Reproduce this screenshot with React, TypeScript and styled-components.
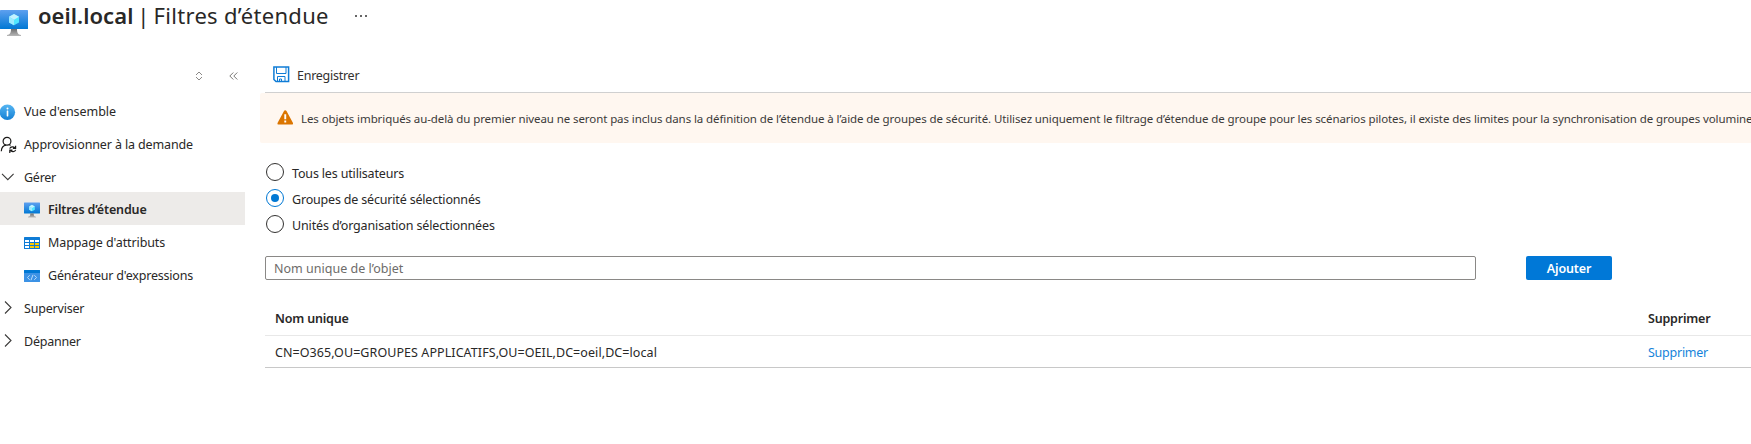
import React from 'react';
import styled, { createGlobalStyle } from 'styled-components';

const GlobalStyle = createGlobalStyle`
  * { box-sizing: border-box; }
  body { margin: 0; background: #fff; overflow: hidden; }
`;

const Page = styled.div`
  height: 444px;
  overflow: hidden;
  color: #292827;
  font: 12.5px "Noto Sans", "Open Sans", sans-serif;
  white-space: nowrap;
  svg { display: block; flex: none; }
`;
const Label = styled.span<{ $ls?: number }>`
  letter-spacing: ${p => p.$ls ?? 0}px;
`;

const Header = styled.header`
  display: flex;
  height: 60px;
  align-items: flex-start;
`;
const HeaderIcon = styled.div`
  width: 38px;
  padding-top: 9px;
`;
const Title = styled.h1`
  display: flex;
  margin: 0;
  font-size: 22px;
  font-weight: 400;
  line-height: 30px;
  strong { font-weight: 600; }
`;
const Divider = styled.span`
  width: 20px;
  text-align: center;
  line-height: 31px;
`;
const More = styled.button`
  display: flex;
  gap: 3px;
  margin: 15px 0 0 26px;
  padding: 0;
  border: 0;
  background: none;
  i { width: 2px; height: 2px; background: #666; }
`;

const Body = styled.div`
  display: flex;
`;
const Sidebar = styled.nav`
  width: 245px;
  flex: none;
`;
const SidebarTools = styled.div`
  display: flex;
  justify-content: flex-end;
  align-items: center;
  gap: 26px;
  height: 34px;
  padding: 0 7px 2px 0;
`;
const NavItem = styled.a<{ $child?: boolean; $active?: boolean }>`
  display: flex;
  align-items: center;
  height: 32.75px;
  padding-top: ${p => (p.$active ? 2 : 3)}px;
  padding-left: ${p => (p.$child ? 24 : 0)}px;
  background: ${p => (p.$active ? '#edebe9' : 'transparent')};
  font-weight: ${p => (p.$active ? 600 : 400)};
`;
const NavIcon = styled.span`
  width: 24px;
`;

const Main = styled.main`
  flex: 1;
  min-width: 0;
  padding-left: 15px;
`;
const Toolbar = styled.div`
  display: flex;
  align-items: center;
  gap: 7px;
  height: 33px;
  margin-left: 5px;
  padding: 0 0 3px 8px;
  border-bottom: 1px solid #d0d0d0;
  color: #323130;
`;
const SaveLabel = styled(Label)`
  padding-top: 2px;
`;
const Banner = styled.div`
  display: flex;
  align-items: center;
  gap: 7px;
  height: 50px;
  padding-left: 17px;
  border-radius: 2px 0 0 2px;
  background: #fff7f0;
  color: #3b3a39;
  font-size: 11.5px;
  overflow: hidden;
  svg { margin-bottom: 2px; }
`;
const Options = styled.div`
  display: flex;
  flex-direction: column;
  padding: 16px 0 0 6px;
`;
const Option = styled.label`
  display: flex;
  align-items: center;
  gap: 8px;
  height: 26px;
`;
const Circle = styled.span<{ $on?: boolean }>`
  display: grid;
  place-items: center;
  width: 18px;
  height: 18px;
  border: 1px solid ${p => (p.$on ? '#0078d4' : '#323130')};
  border-radius: 50%;
  &::after {
    content: "";
    width: 8px;
    height: 8px;
    border-radius: 50%;
    background: ${p => (p.$on ? '#0078d4' : 'transparent')};
  }
`;
const OptionLabel = styled(Label)`
  padding-top: 3px;
`;
const AddRow = styled.div`
  display: flex;
  gap: 50px;
  margin: 19px 0 0 5px;
`;
const Field = styled.div`
  width: 1211px;
  height: 24px;
  padding-left: 8px;
  border: 1px solid #8a8886;
  border-radius: 2px;
  color: #6e6c6a;
  line-height: 24px;
`;
const AddButton = styled.button`
  width: 86px;
  height: 24px;
  padding: 1px 0 0;
  border: 0;
  border-radius: 2px;
  background: #0078d7;
  color: #fff;
  font: 600 12.5px/23px "Noto Sans", sans-serif;
`;
const Table = styled.div`
  margin: 22px 0 0 5px;
`;
const TableRow = styled.div<{ $head?: boolean }>`
  display: grid;
  grid-template-columns: 1373px 1fr;
  align-items: center;
  height: ${p => (p.$head ? 34 : 32)}px;
  padding-top: ${p => (p.$head ? 0 : 2)}px;
  padding-left: 10px;
  border-bottom: 1px solid ${p => (p.$head ? '#e8e8e8' : '#c8c8c8')};
  font-weight: ${p => (p.$head ? 600 : 400)};
`;
const DeleteLink = styled(Label)`
  color: #1583da;
`;

const Monitor = ({ size }: { size: number }) => (
  <svg width={size} height={size} viewBox="0 0 28 28">
    <defs>
      <linearGradient id="screen" x2="0" y2="1">
        <stop stopColor="#5ea0ef" />
        <stop offset="1" stopColor="#0078d4" />
      </linearGradient>
      <linearGradient id="stand" x2="0" y2="1">
        <stop stopColor="#707070" />
        <stop offset="1" stopColor="#b8b8b8" />
      </linearGradient>
    </defs>
    <rect y="1" width="28" height="19" rx=".6" fill="url(#screen)" />
    <path d="M11 20h6c0 4 1 5.500 4 6v1H7v-1c3-.5 4-2 4-6z" fill="url(#stand)" />
    <path d="M14 5l5 2.800v5.600l-5 2.900-5-2.900V7.800z" fill="#50e6ff" />
    <path d="M14 5l5 2.800-5 2.900-5-2.900z" fill="#c3f1ff" />
    <path d="M9 7.800l5 2.900v5.600l-5-2.900z" fill="#9cebff" />
  </svg>
);
const Info = () => (
  <svg width="16" height="16" viewBox="0 0 16 16">
    <defs>
      <linearGradient id="info" x2="0" y2="1">
        <stop stopColor="#55b5f2" />
        <stop offset="1" stopColor="#1580d4" />
      </linearGradient>
    </defs>
    <circle cx="7.400" cy="8.300" r="7.700" fill="url(#info)" />
    <circle cx="7.500" cy="4.600" r="1" fill="#fff" />
    <rect x="6.700" y="6.600" width="1.600" height="5.800" rx=".4" fill="#fff" />
  </svg>
);
const UserSync = () => (
  <svg width="17" height="18" viewBox="0 0 17 18" fill="none" stroke="#1b1a19" strokeWidth="1.200">
    <circle cx="7" cy="5.300" r="3.900" />
    <path d="M1.300 15.200c.2-3.400 2.100-5.600 4.700-6M9.200 8.600l1.300 1" />
    <path d="M9.700 12.600c.8-2 4-2.300 5.300-.5M15.600 9.700v2.700h-2.700M15.700 13.900c-.8 2-4 2.300-5.300.5M9.800 16.900v-2.700h2.700" />
  </svg>
);
const Chevron = ({ open }: { open?: boolean }) => (
  <svg width="16" height="16" viewBox="0 0 16 16" fill="none" stroke="#3b3a39" strokeWidth="1.100">
    <path d={open ? 'M2 4.800l5.800 5.800 5.800-5.800' : 'M5 1.500l6 6-6 6'} />
  </svg>
);
const Grid = () => (
  <svg width="16" height="16" viewBox="0 0 16 16">
    <rect y="2" width="16" height="12" rx=".5" fill="#0f7cd6" />
    <path d="M1 5h4v2H1zM6 5h4v2H6zM11 5h4v2h-4zM1 8h4v2H1zM1 11h4v2H1z" fill="#fff" />
    <path d="M6 8h4v2H6zM11 8h4v2h-4zM6 11h4v2H6zM11 11h4v2h-4z" fill="#ffca00" />
  </svg>
);
const Code = () => (
  <svg width="16" height="16" viewBox="0 0 16 16">
    <rect y="2" width="16" height="12" rx=".5" fill="#3c92e5" />
    <path d="M0 2.500q0-.5.5-.5h15q.5 0 .5.500V5H0z" fill="#0078d4" />
    <path d="M5.700 7.200L3.500 9.500l2.200 2.300M10.300 7.200l2.200 2.300-2.200 2.300M9 6.800l-2 5.400" fill="none" stroke="#c4e2fb" strokeWidth=".9" />
  </svg>
);
const Save = () => (
  <svg width="17" height="17" viewBox="0 0 17 17" fill="none" stroke="#0f7cd6">
    <path d="M.9.9h14.700v14.700H3L.9 13.500z" strokeWidth="1.500" />
    <path d="M3.500 1v6.500h9.500V1M4.500 15.500v-5h7.500v5M6.500 15.500v-2.500h2v2.500" strokeWidth="1" />
  </svg>
);
const Warning = () => (
  <svg width="17" height="15" viewBox="0 0 17 15">
    <path d="M8.200.2q.8 0 1.300.9l6.500 12q.4 1.500-.9 1.500H1.400Q0 14.600.5 13.100l6.500-12Q7.400.2 8.200.2z" fill="#db7500" />
    <path d="M7.300 4.300h1.900v5H7.300zM7.300 10.600h1.900v1.900H7.300z" fill="#fff" />
  </svg>
);

type Item = { text: string; ls: number; icon: React.ReactNode; child?: boolean; active?: boolean };
const navItems: Item[] = [
  { text: "Vue d'ensemble", ls: -0.04, icon: <Info /> },
  { text: 'Approvisionner à la demande', ls: -0.13, icon: <UserSync /> },
  { text: 'Gérer', ls: -0.25, icon: <Chevron open /> },
  { text: 'Filtres d’étendue', ls: -0.15, icon: <Monitor size={16} />, child: true, active: true },
  { text: "Mappage d'attributs", ls: -0.1, icon: <Grid />, child: true },
  { text: "Générateur d'expressions", ls: -0.2, icon: <Code />, child: true },
  { text: 'Superviser', ls: -0.2, icon: <Chevron /> },
  { text: 'Dépanner', ls: -0.22, icon: <Chevron /> },
];
const options = [
  { text: 'Tous les utilisateurs', ls: -0.16 },
  { text: 'Groupes de sécurité sélectionnés', ls: -0.18, on: true },
  { text: 'Unités d’organisation sélectionnées', ls: -0.14 },
];

export default function App() {
  return (
    <Page>
      <GlobalStyle />
      <Header>
        <HeaderIcon><Monitor size={28} /></HeaderIcon>
        <Title>
          <Label as="strong" $ls={0.05}>oeil.local</Label>
          <Divider>|</Divider>
          <Label $ls={0.32}>Filtres d’étendue</Label>
        </Title>
        <More aria-label="Plus"><i /><i /><i /></More>
      </Header>
      <Body>
        <Sidebar>
          <SidebarTools>
            <svg width="8" height="10" viewBox="0 0 8 10" fill="none" stroke="#8a8886">
              <path d="M1 4l3-3 3 3M1 6l3 3 3-3" />
            </svg>
            <svg width="9" height="10" viewBox="0 0 9 10" fill="none" stroke="#797775">
              <path d="M4.300 1.500L.8 5l3.500 3.500M8.300 1.500L4.800 5l3.500 3.500" />
            </svg>
          </SidebarTools>
          {navItems.map(n => (
            <NavItem key={n.text} $child={n.child} $active={n.active}>
              <NavIcon>{n.icon}</NavIcon>
              <Label $ls={n.ls}>{n.text}</Label>
            </NavItem>
          ))}
        </Sidebar>
        <Main>
          <Toolbar>
            <Save />
            <SaveLabel $ls={-0.26}>Enregistrer</SaveLabel>
          </Toolbar>
          <Banner>
            <Warning />
            <Label $ls={-0.094}>
              Les objets imbriqués au-delà du premier niveau ne seront pas inclus dans la définition de l’étendue à l’aide de groupes de sécurité. Utilisez uniquement le filtrage d’étendue de groupe pour les scénarios pilotes, il existe des limites pour la synchronisation de groupes volumine
            </Label>
          </Banner>
          <Options>
            {options.map(o => (
              <Option key={o.text}>
                <Circle $on={o.on} />
                <OptionLabel $ls={o.ls}>{o.text}</OptionLabel>
              </Option>
            ))}
          </Options>
          <AddRow>
            <Field><Label $ls={0.01}>Nom unique de l’objet</Label></Field>
            <AddButton><Label $ls={-0.15}>Ajouter</Label></AddButton>
          </AddRow>
          <Table>
            <TableRow $head>
              <Label $ls={-0.18}>Nom unique</Label>
              <Label $ls={-0.2}>Supprimer</Label>
            </TableRow>
            <TableRow>
              <Label $ls={0.075}>CN=O365,OU=GROUPES APPLICATIFS,OU=OEIL,DC=oeil,DC=local</Label>
              <DeleteLink $ls={-0.25}>Supprimer</DeleteLink>
            </TableRow>
          </Table>
        </Main>
      </Body>
    </Page>
  );
}
